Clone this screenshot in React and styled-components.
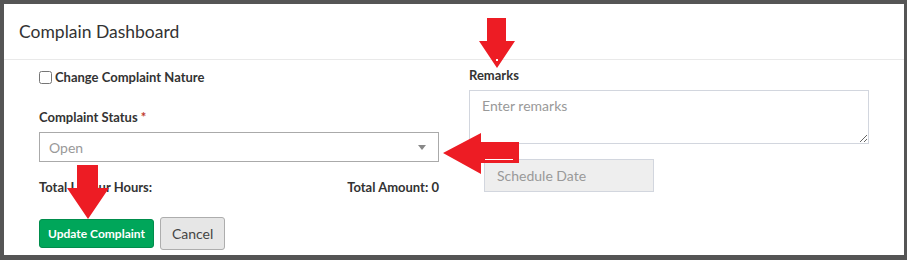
import React from "react";
import styled, { createGlobalStyle } from "styled-components";

const GlobalStyle = createGlobalStyle`
  html, body {
    margin: 0;
    padding: 0;
    background: #555555;
    font-family: "Lato", "Liberation Sans", sans-serif;
    color: #333;
  }
  * { box-sizing: border-box; }
`;

function Arrows() {
  return (
    <Overlay width="907" height="260" viewBox="0 0 907 260">
      <polygon fill="#ed1c24" points="487,18 506,18 506,41 515,41 497,68 479,41 487,41" />
      <rect x="496" y="59" width="2" height="2" fill="#fff" />
      <polygon fill="#ed1c24" points="443,153 481,133 481,142 519,142 519,163 481,163 481,174" />
      <rect x="485" y="159" width="28" height="1" fill="#fff" />
      <polygon fill="#ed1c24" points="77,165 98,165 98,188 109,188 88,219 67,188 77,188" />
    </Overlay>
  );
}

export default function App() {
  return (
    <>
      <GlobalStyle />
      <Screen>
        <Modal>
          <Header>
            <Title>Complain Dashboard</Title>
          </Header>
          <Body>
            <Column>
              <CheckRow>
                <Check type="checkbox" />
                <Label>Change Complaint Nature</Label>
              </CheckRow>
              <Label $top={22}>
                Complaint Status <Required>*</Required>
              </Label>
              <Select>
                <span>Open</span>
                <Caret />
              </Select>
              <Totals>
                <Label>Total Labour Hours:</Label>
                <Label>Total Amount: 0</Label>
              </Totals>
              <Actions>
                <Button $variant="success">Update Complaint</Button>
                <Button>Cancel</Button>
              </Actions>
            </Column>
            <Column>
              <Label $top={-2}>Remarks</Label>
              <Remarks placeholder="Enter remarks" />
              <DateInput disabled placeholder="Schedule Date" />
            </Column>
          </Body>
        </Modal>
        <Arrows />
      </Screen>
    </>
  );
}

const Screen = styled.div`
  position: relative;
  width: 907px;
  height: 260px;
  padding: 4px 3px 4px 4px;
  background: #555555;
`;

const Modal = styled.div`
  width: 900px;
  height: 251px;
  background: #fff;
`;

const Header = styled.div`
  padding: 15px;
  height: 56px;
  border-bottom: 1px solid #e9e9e9;
`;

const Title = styled.h4`
  margin: 0;
  font-size: 17.5px;
  font-weight: 400;
  line-height: 25px;
  color: #333;
`;

const Body = styled.div`
  display: grid;
  grid-template-columns: 400px 400px;
  column-gap: 30px;
  padding: 8px 0 0 35px;
`;

const Column = styled.div`
  display: flex;
  flex-direction: column;
  align-items: flex-start;
`;

const CheckRow = styled.div`
  display: flex;
  align-items: center;
  height: 18px;
`;

const Check = styled.input`
  width: 13px;
  height: 13px;
  margin: 0 3px 0 0;
`;

const Label = styled.label`
  display: block;
  margin-top: ${(p) => p.$top || 0}px;
  font-size: 13px;
  font-weight: 700;
  line-height: 18px;
  color: #333;
`;

const Required = styled.span`
  color: #c0392b;
`;

const Select = styled.div`
  display: flex;
  align-items: center;
  justify-content: space-between;
  width: 400px;
  height: 30px;
  margin-top: 6px;
  padding: 0 12px 0 9px;
  border: 1px solid #aaa;
  font-size: 14px;
  color: #999;
`;

const Caret = styled.span`
  width: 0;
  height: 0;
  border-left: 4px solid transparent;
  border-right: 4px solid transparent;
  border-top: 5px solid #888;
`;

const Totals = styled.div`
  display: flex;
  justify-content: space-between;
  width: 400px;
  margin-top: 16px;
`;

const Actions = styled.div`
  display: flex;
  align-items: center;
  gap: 6px;
  margin-top: 21px;
`;

const Button = styled.button`
  height: ${(p) => (p.$variant === "success" ? 29 : 33)}px;
  padding: 0 ${(p) => (p.$variant === "success" ? 8 : 11)}px;
  border: 1px solid ${(p) => (p.$variant === "success" ? "#008d4c" : "#adadad")};
  border-radius: 3px;
  background: ${(p) => (p.$variant === "success" ? "#00a65a" : "#e6e6e6")};
  color: ${(p) => (p.$variant === "success" ? "#fff" : "#444")};
  font-family: "Lato", "Liberation Sans", sans-serif;
  font-size: ${(p) => (p.$variant === "success" ? 12 : 14)}px;
  font-weight: ${(p) => (p.$variant === "success" ? 700 : 400)};
`;

const Remarks = styled.textarea`
  width: 400px;
  height: 54px;
  margin-top: 6px;
  padding: 6px 12px;
  border: 1px solid #d2d6de;
  resize: vertical;
  font-family: "Lato", "Liberation Sans", sans-serif;
  font-size: 14px;
  &::placeholder { color: #999; }
`;

const DateInput = styled.input`
  width: 170px;
  height: 33px;
  margin: 15px 0 0 15px;
  padding: 0 12px;
  border: 1px solid #d2d6de;
  background: #eee;
  font-family: "Lato", "Liberation Sans", sans-serif;
  font-size: 14px;
  &::placeholder { color: #999; }
`;

const Overlay = styled.svg`
  position: absolute;
  top: 0;
  left: 0;
  pointer-events: none;
`;
